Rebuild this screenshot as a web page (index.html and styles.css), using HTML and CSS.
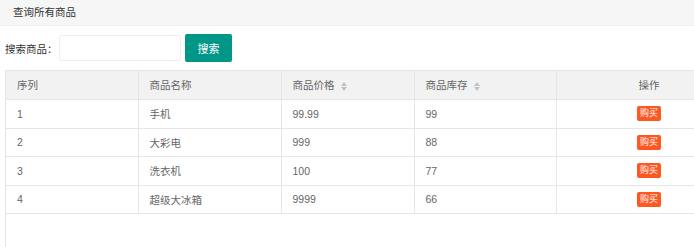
FILE: index.html
```html
<!DOCTYPE html>
<html>
	<head>
		<title>查询所有商品</title>
		<link rel="stylesheet" href="styles.css">
	</head>
	<body>
		<div class="card-header">查询所有商品</div>
		<div class="search">
			<label>搜索商品：</label>
			<input type="text" class="search-input">
			<button class="btn">搜索</button>
		</div>
		<div class="table-view">
			<table class="goods">
				<colgroup>
					<col style="width: 132px">
					<col style="width: 143px">
					<col style="width: 133px">
					<col style="width: 142px">
					<col style="width: 186px">
				</colgroup>
				<thead>
					<tr>
						<th>序列</th>
						<th>商品名称</th>
						<th>商品价格 <span class="sort"></span></th>
						<th>商品库存 <span class="sort"></span></th>
						<th class="center">操作</th>
					</tr>
				</thead>
				<tbody>
					<tr><td>1</td><td>手机</td><td>99.99</td><td>99</td><td class="center"><a class="buy">购买</a></td></tr>
					<tr><td>2</td><td>大彩电</td><td>999</td><td>88</td><td class="center"><a class="buy">购买</a></td></tr>
					<tr><td>3</td><td>洗衣机</td><td>100</td><td>77</td><td class="center"><a class="buy">购买</a></td></tr>
					<tr><td>4</td><td>超级大冰箱</td><td>9999</td><td>66</td><td class="center"><a class="buy">购买</a></td></tr>
				</tbody>
			</table>
		</div>
	</body>
</html>
```

FILE: styles.css
```css
html, body {
	margin: 0px;
	height: 100%;
	overflow: hidden;
	background-color: white;
}
body {
	font-family: "Liberation Sans", "Noto Sans CJK SC", sans-serif;
	font-size: 10.5px;
	color: #333;
}
.card-header {
	height: 26px;
	line-height: 25px;
	padding-left: 13px;
	background-color: #f6f6f6;
	border-bottom: 1px solid #f0f0f0;
	box-sizing: border-box;
}
.search {
	display: flex;
	align-items: center;
	padding: 8px 0px 0px 5px;
	height: 28px;
}
.search label {
	width: 54px;
}
.search-input {
	width: 122px;
	height: 26px;
	box-sizing: border-box;
	border: 1px solid #eeeeee;
	border-radius: 2px;
	margin: 0px;
	padding: 0px 8px;
	outline: none;
}
.btn {
	margin-left: 4px;
	width: 47px;
	height: 28px;
	border: none;
	border-radius: 2px;
	background-color: #009688;
	color: white;
	font-family: inherit;
	font-size: 11px;
	padding: 0px;
}
.table-view {
	margin: 8px 0px 0px 5px;
	height: 177px;
	overflow: hidden;
	border-left: 1px solid #e6e6e6;
	border-top: 1px solid #e6e6e6;
	box-sizing: border-box;
}
.goods {
	border-collapse: collapse;
	table-layout: fixed;
	width: 736px;
	color: #666;
}
.goods th, .goods td {
	height: 28px;
	padding: 0px 11px;
	text-align: left;
	font-weight: normal;
	border-right: 1px solid #e6e6e6;
	border-bottom: 1px solid #e6e6e6;
	box-sizing: border-box;
}
.goods th {
	background-color: #f2f2f2;
}
.goods tbody tr:nth-child(odd) td {
	height: 29px;
}
.goods .center {
	text-align: center;
}
.sort {
	display: inline-block;
	position: relative;
	width: 7px;
	height: 9px;
	margin-left: 4px;
	vertical-align: middle;
}
.sort::before, .sort::after {
	content: "";
	position: absolute;
	left: 0px;
	border-left: 3.5px solid transparent;
	border-right: 3.5px solid transparent;
}
.sort::before {
	top: 0px;
	border-bottom: 4px solid #c2c2c2;
}
.sort::after {
	bottom: 0px;
	border-top: 4px solid #c2c2c2;
}
.buy {
	display: inline-block;
	height: 15px;
	line-height: 15px;
	padding: 0px 3px;
	font-size: 9px;
	color: white;
	background-color: #ff5722;
	border-radius: 2px;
}
```
